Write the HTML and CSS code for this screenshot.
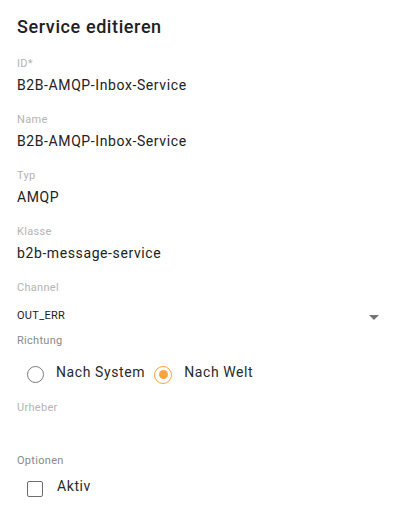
FILE: index.html
```html
<!DOCTYPE html>
<html lang="de">
<head>
<meta charset="utf-8">
<title>Service editieren</title>
<link rel="stylesheet" href="styles.css">
</head>
<body>
<div class="form">
  <h1 class="title">Service editieren</h1>

  <div class="field">
    <div class="label">ID*</div>
    <div class="value">B2B-AMQP-Inbox-Service</div>
  </div>
  <div class="field">
    <div class="label">Name</div>
    <div class="value">B2B-AMQP-Inbox-Service</div>
  </div>
  <div class="field">
    <div class="label">Typ</div>
    <div class="value">AMQP</div>
  </div>
  <div class="field">
    <div class="label">Klasse</div>
    <div class="value">b2b-message-service</div>
  </div>

  <div class="label">Channel</div>
  <div class="select">
    <span class="select-text">OUT_ERR</span>
    <span class="arrow"></span>
  </div>

  <div class="label dark richtung">Richtung</div>
  <div class="radios">
    <label class="radio">
      <span class="circle"></span>
      <span class="option-text">Nach System</span>
    </label>
    <label class="radio checked">
      <span class="circle"><span class="dot"></span></span>
      <span class="option-text">Nach Welt</span>
    </label>
  </div>

  <div class="label urheber">Urheber</div>

  <div class="label dark optionen">Optionen</div>
  <div class="check-row">
    <span class="box"></span>
    <span class="option-text">Aktiv</span>
  </div>
</div>
</body>
</html>
```

FILE: styles.css
```css
html, body {
  margin: 0;
  padding: 0;
  background: #ffffff;
}
body {
  font-family: Roboto, "Liberation Sans", sans-serif;
  color: #222222;
}
.form {
  padding: 15px 17px 0 17px;
  display: flex;
  flex-direction: column;
}
.title {
  margin: 0 0 17px 0;
  font-size: 18px;
  font-weight: 500;
  line-height: 24px;
  letter-spacing: 0.6px;
  color: #212121;
}
.field {
  display: flex;
  flex-direction: column;
  margin-bottom: 17px;
}
.label {
  font-size: 11px;
  line-height: 16px;
  letter-spacing: 0.3px;
  color: #b4b4b4;
}
.label.dark {
  color: #8a8a8a;
}
.value {
  margin-top: 3px;
  font-size: 14px;
  line-height: 20px;
  letter-spacing: 0.6px;
  color: #222222;
}
.select {
  margin-top: 10px;
  height: 20px;
  display: flex;
  align-items: center;
  justify-content: space-between;
  padding-right: 1px;
}
.select-text {
  font-size: 11px;
  line-height: 20px;
  letter-spacing: 0.3px;
  color: #222222;
}
.arrow {
  width: 0;
  height: 0;
  border-left: 5px solid transparent;
  border-right: 5px solid transparent;
  border-top: 5px solid #757575;
  margin-top: 2px;
}
.richtung {
  margin-top: 7px;
}
.radios {
  margin-top: 11px;
  height: 24px;
  display: flex;
  align-items: center;
  padding-left: 10px;
  gap: 9px;
}
.radio {
  display: flex;
  align-items: center;
  gap: 12px;
}
.circle {
  width: 17px;
  height: 17px;
  box-sizing: border-box;
  border: 1.5px solid #7a7a7a;
  border-radius: 50%;
  display: flex;
  align-items: center;
  justify-content: center;
  margin-top: 5px;
}
.radio.checked .circle {
  width: 18px;
  height: 18px;
  border-color: #f7a43e;
}
.dot {
  width: 9px;
  height: 9px;
  border-radius: 50%;
  background: #f7a43e;
}
.option-text {
  font-size: 14px;
  line-height: 20px;
  letter-spacing: 0.6px;
  color: #2a2a2a;
}
.urheber {
  margin-top: 16px;
}
.optionen {
  margin-top: 37px;
}
.check-row {
  margin-top: 5px;
  height: 24px;
  display: flex;
  align-items: center;
  padding-left: 10px;
  gap: 14px;
}
.box {
  width: 16px;
  height: 16px;
  box-sizing: border-box;
  border: 1.5px solid #6e6e6e;
  border-radius: 2px;
  margin-top: 6px;
}
```
